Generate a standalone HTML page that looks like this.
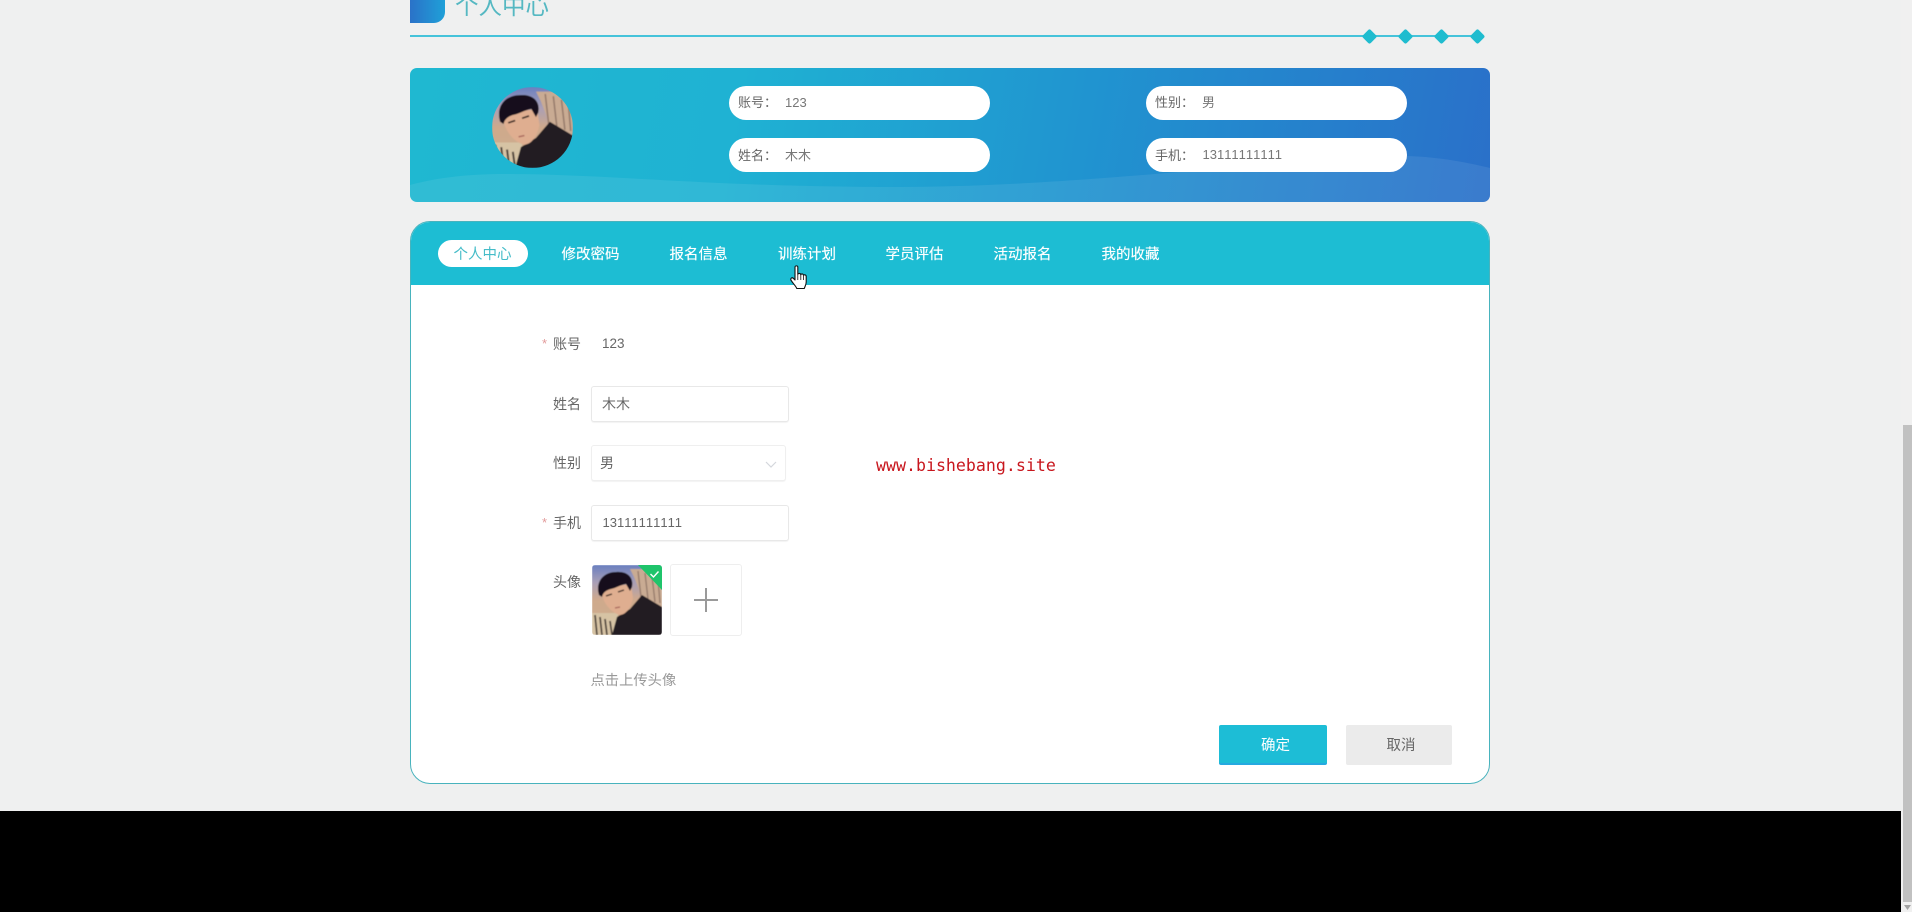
<!DOCTYPE html>
<html lang="zh-CN">
<head>
<meta charset="utf-8">
<title>个人中心</title>
<style>
html,body{margin:0;padding:0;width:1912px;height:912px;overflow:hidden;background:#eff0f0;}
body{position:relative;font-family:"Liberation Sans","Noto Sans CJK SC",sans-serif;color:#666;font-kerning:none;}
div,span{position:absolute;box-sizing:border-box;}
.t{white-space:nowrap;line-height:20px;height:20px;}
.pill{background:#fff;border-radius:17px;height:34px;}
.p{font-size:13px;color:#666;}
.v{font-size:13px;color:#777;}
.tab{font-size:14.5px;color:#fff;top:245px;text-shadow:0 0 .6px rgba(255,255,255,.8);}
.lab{font-size:14px;color:#666;}
.star{font-size:13px;color:#e29a9a;}
.box{background:#fff;border:1px solid #e8e8e8;border-radius:3px;box-shadow:0 1px 1px rgba(0,0,0,.05);}
.d{width:11px;height:11px;background:#1fbccf;transform:rotate(45deg);border-radius:2px;top:31px;}
</style>
</head>
<body>
<svg width="0" height="0" style="position:absolute">
  <defs>
    <linearGradient id="sky" x1="0" y1="0" x2="0" y2="1">
      <stop offset="0" stop-color="#6a7fc0"/><stop offset=".25" stop-color="#a99fb6"/><stop offset=".5" stop-color="#cfa98c"/><stop offset="1" stop-color="#cdb090"/>
    </linearGradient>
    <filter id="soft"><feGaussianBlur stdDeviation=".55"/></filter>
    <symbol id="face" viewBox="0 0 70 70">
      <g filter="url(#soft)">
      <rect width="70" height="70" fill="url(#sky)"/>
      <path d="M38 4h32v40L50 32 42 12z" fill="#c9ab93"/>
      <path d="M46 6l3 26M53 8l3 26M60 11l3 26M66 14l2 24" stroke="#94796a" stroke-width="1.3" fill="none"/>
      <path d="M0 48h26v22H0z" fill="#d6c3a4"/>
      <path d="M3 50l2 20M8 52l2 18M13 54l2 16M18 56l2 14" stroke="#4b4038" stroke-width="1.7" fill="none"/>
      <path d="M20 70L25 52 38 44 50 30 70 42V70z" fill="#211c20"/>
      <path d="M9 27L24 21 39 19 41 33C39 42 35 49 28 50 20 48 12 40 9 27z" fill="#dfae90"/>
      <path d="M7 30C3 16 12 7 24 7 35 6 42 12 40 22L38 26 34 19C28 20 24 23 19 24 15 25 11 27 10 32z" fill="#15111a"/>
      <path d="M14 31l6-2M26 27l6-2" stroke="#382520" stroke-width="1.4"/>
      <path d="M23 43l5-1" stroke="#a9675d" stroke-width="1.2"/>
      </g>
    </symbol>
  </defs>
</svg>

<!-- Title -->
<div style="left:410px;top:-10px;width:35px;height:33px;border-radius:0 0 11px 0;background:linear-gradient(90deg,#2a72c8,#1fa0d8);"></div>
<div class="t" style="left:455px;top:-9px;height:30px;line-height:30px;font-size:23.5px;color:#55b8c2;">个人中心</div>
<div style="left:410px;top:35px;width:1068px;height:2px;background:#45c3da;"></div>
<div class="d" style="left:1364px;"></div>
<div class="d" style="left:1400px;"></div>
<div class="d" style="left:1436px;"></div>
<div class="d" style="left:1472px;"></div>

<!-- Banner -->
<div style="left:410px;top:68px;width:1080px;height:134px;border-radius:7px;overflow:hidden;background:linear-gradient(100deg,#1fb8d1 0%,#1fb2d3 30%,#2094d0 62%,#2a70c9 100%);">
  <svg width="1080" height="134" style="position:absolute;left:0;top:0">
    <path d="M0 117C30 109 60 106 95 106 200 106 300 119 486 119 560 119 640 115 757 105 850 97 930 87 997 88 1030 89 1060 95 1080 100V134H0z" fill="#fff" fill-opacity=".08"/>
  </svg>
</div>
<svg width="81" height="81" style="position:absolute;left:492px;top:87px"><defs><clipPath id="c"><circle cx="40.5" cy="40.5" r="40.5"/></clipPath></defs><g clip-path="url(#c)"><use href="#face" width="81" height="81"/></g></svg>

<div class="pill" style="left:729px;top:86px;width:261px;"></div>
<div class="pill" style="left:729px;top:138px;width:261px;"></div>
<div class="pill" style="left:1146px;top:86px;width:261px;"></div>
<div class="pill" style="left:1146px;top:138px;width:261px;"></div>
<div class="t p" style="left:738px;top:93px;">账号：</div>
<div class="t v" style="left:785px;top:93px;">123</div>
<div class="t p" style="left:738px;top:146px;">姓名：</div>
<div class="t v" style="left:785px;top:146px;">木木</div>
<div class="t p" style="left:1155px;top:93px;">性别：</div>
<div class="t v" style="left:1202px;top:93px;">男</div>
<div class="t p" style="left:1155px;top:146px;">手机：</div>
<div class="t v" style="left:1202.5px;top:145px;">13111111111</div>

<!-- Card -->
<div style="left:410px;top:221px;width:1080px;height:563px;background:#fff;border:1px solid #48b3bd;border-radius:20px;overflow:hidden;">
  <div style="left:-1px;top:-1px;width:1080px;height:64px;background:#1dbdd3;"></div>
</div>
<div style="left:438px;top:240px;width:90px;height:27px;border-radius:14px;background:#fff;"></div>
<div class="t tab" style="left:453.5px;color:#45bcc8;text-shadow:none;">个人中心</div>
<div class="t tab" style="left:561.5px;">修改密码</div>
<div class="t tab" style="left:669.5px;">报名信息</div>
<div class="t tab" style="left:778px;">训练计划</div>
<div class="t tab" style="left:885.5px;">学员评估</div>
<div class="t tab" style="left:993.5px;">活动报名</div>
<div class="t tab" style="left:1101.5px;">我的收藏</div>

<!-- Form -->
<div class="t star" style="left:542px;top:334px;">*</div>
<div class="t lab" style="left:553px;top:334px;">账号</div>
<div class="t" style="left:602px;top:334px;font-size:13.5px;color:#666;">123</div>

<div class="t lab" style="left:553px;top:394px;">姓名</div>
<div class="box" style="left:591px;top:386px;width:198px;height:36px;"></div>
<div class="t lab" style="left:602px;top:394px;">木木</div>

<div class="t lab" style="left:553px;top:453px;">性别</div>
<div class="box" style="left:591px;top:445px;width:195px;height:36px;border-color:#efefef;"></div>
<div class="t lab" style="left:600px;top:453px;">男</div>
<svg width="12" height="8" style="position:absolute;left:765px;top:461px"><path d="M1 1l5 5 5-5" fill="none" stroke="#d4d7dc" stroke-width="1.2"/></svg>

<div class="t star" style="left:542px;top:513px;">*</div>
<div class="t lab" style="left:553px;top:513px;">手机</div>
<div class="box" style="left:591px;top:505px;width:198px;height:36px;"></div>
<div class="t" style="left:602.5px;top:513px;font-size:13px;color:#666;">13111111111</div>

<div class="t lab" style="left:553px;top:572px;">头像</div>
<svg width="70" height="70" style="position:absolute;left:592px;top:565px;border-radius:3px"><use href="#face" width="70" height="70"/><path d="M46 0H70V25z" fill="#1fc46b"/><path d="M58.5 9l3 3 5-5.5" fill="none" stroke="#fff" stroke-width="1.4"/></svg>
<div style="left:670px;top:564px;width:72px;height:72px;background:#fff;border:1px solid #eeeeee;border-radius:3px;"></div>
<div style="left:694px;top:599px;width:24px;height:2px;background:#9a9a9a;"></div>
<div style="left:705px;top:588px;width:2px;height:24px;background:#9a9a9a;"></div>
<div class="t" style="left:590.5px;top:671px;font-size:14.3px;color:#999;">点击上传头像</div>

<div class="t" style="left:876px;top:456px;font-family:'DejaVu Sans Mono','Liberation Mono',monospace;font-size:16.6px;color:#c8161d;">www.bishebang.site</div>

<!-- Buttons -->
<div style="left:1219px;top:725px;width:108px;height:40px;background:#1dbdd6;border-radius:2px;border-bottom:2px solid #26a9e0;"></div>
<div class="t" style="left:1261px;top:736px;font-size:14.5px;color:#fff;">确定</div>
<div style="left:1346px;top:725px;width:106px;height:40px;background:#ebebeb;border-radius:2px;"></div>
<div class="t" style="left:1386.5px;top:736px;font-size:14.5px;color:#666;">取消</div>

<!-- Black bar and scrollbar -->
<div style="left:0;top:811px;width:1901px;height:101px;background:#000;"></div>
<div style="left:1901px;top:0;width:11px;height:912px;background:#f0f0f0;"></div>
<div style="left:1903px;top:425px;width:9px;height:477px;background:#c1c1c1;"></div>
<svg width="9" height="8" style="position:absolute;left:1903px;top:903px"><path d="M1 2h7L4.5 7z" fill="#a3a3a3"/></svg>

<!-- Cursor -->
<svg width="18" height="25" viewBox="0 0 18 25" style="position:absolute;left:790px;top:265px">
  <path d="M5 2C5 .5 7.8 .5 7.8 2V9.5C8.3 8 10.6 8 10.8 9.8 11.3 8.5 13.3 8.7 13.5 10.4 14 9.4 16.2 9.6 16.2 11.6V17C16.2 20 14.8 21.5 14.3 23.5H6.8C5.8 21 3 18.5 1 15.2.2 13.6 1.9 12 3.2 13.2L5 15z" fill="#fff" stroke="#111" stroke-width="1.1" stroke-linejoin="round"/>
  <path d="M7.8 10v5M10.8 10v5M13.5 11v4" stroke="#111" stroke-width=".8" fill="none"/>
</svg>
</body>
</html>
